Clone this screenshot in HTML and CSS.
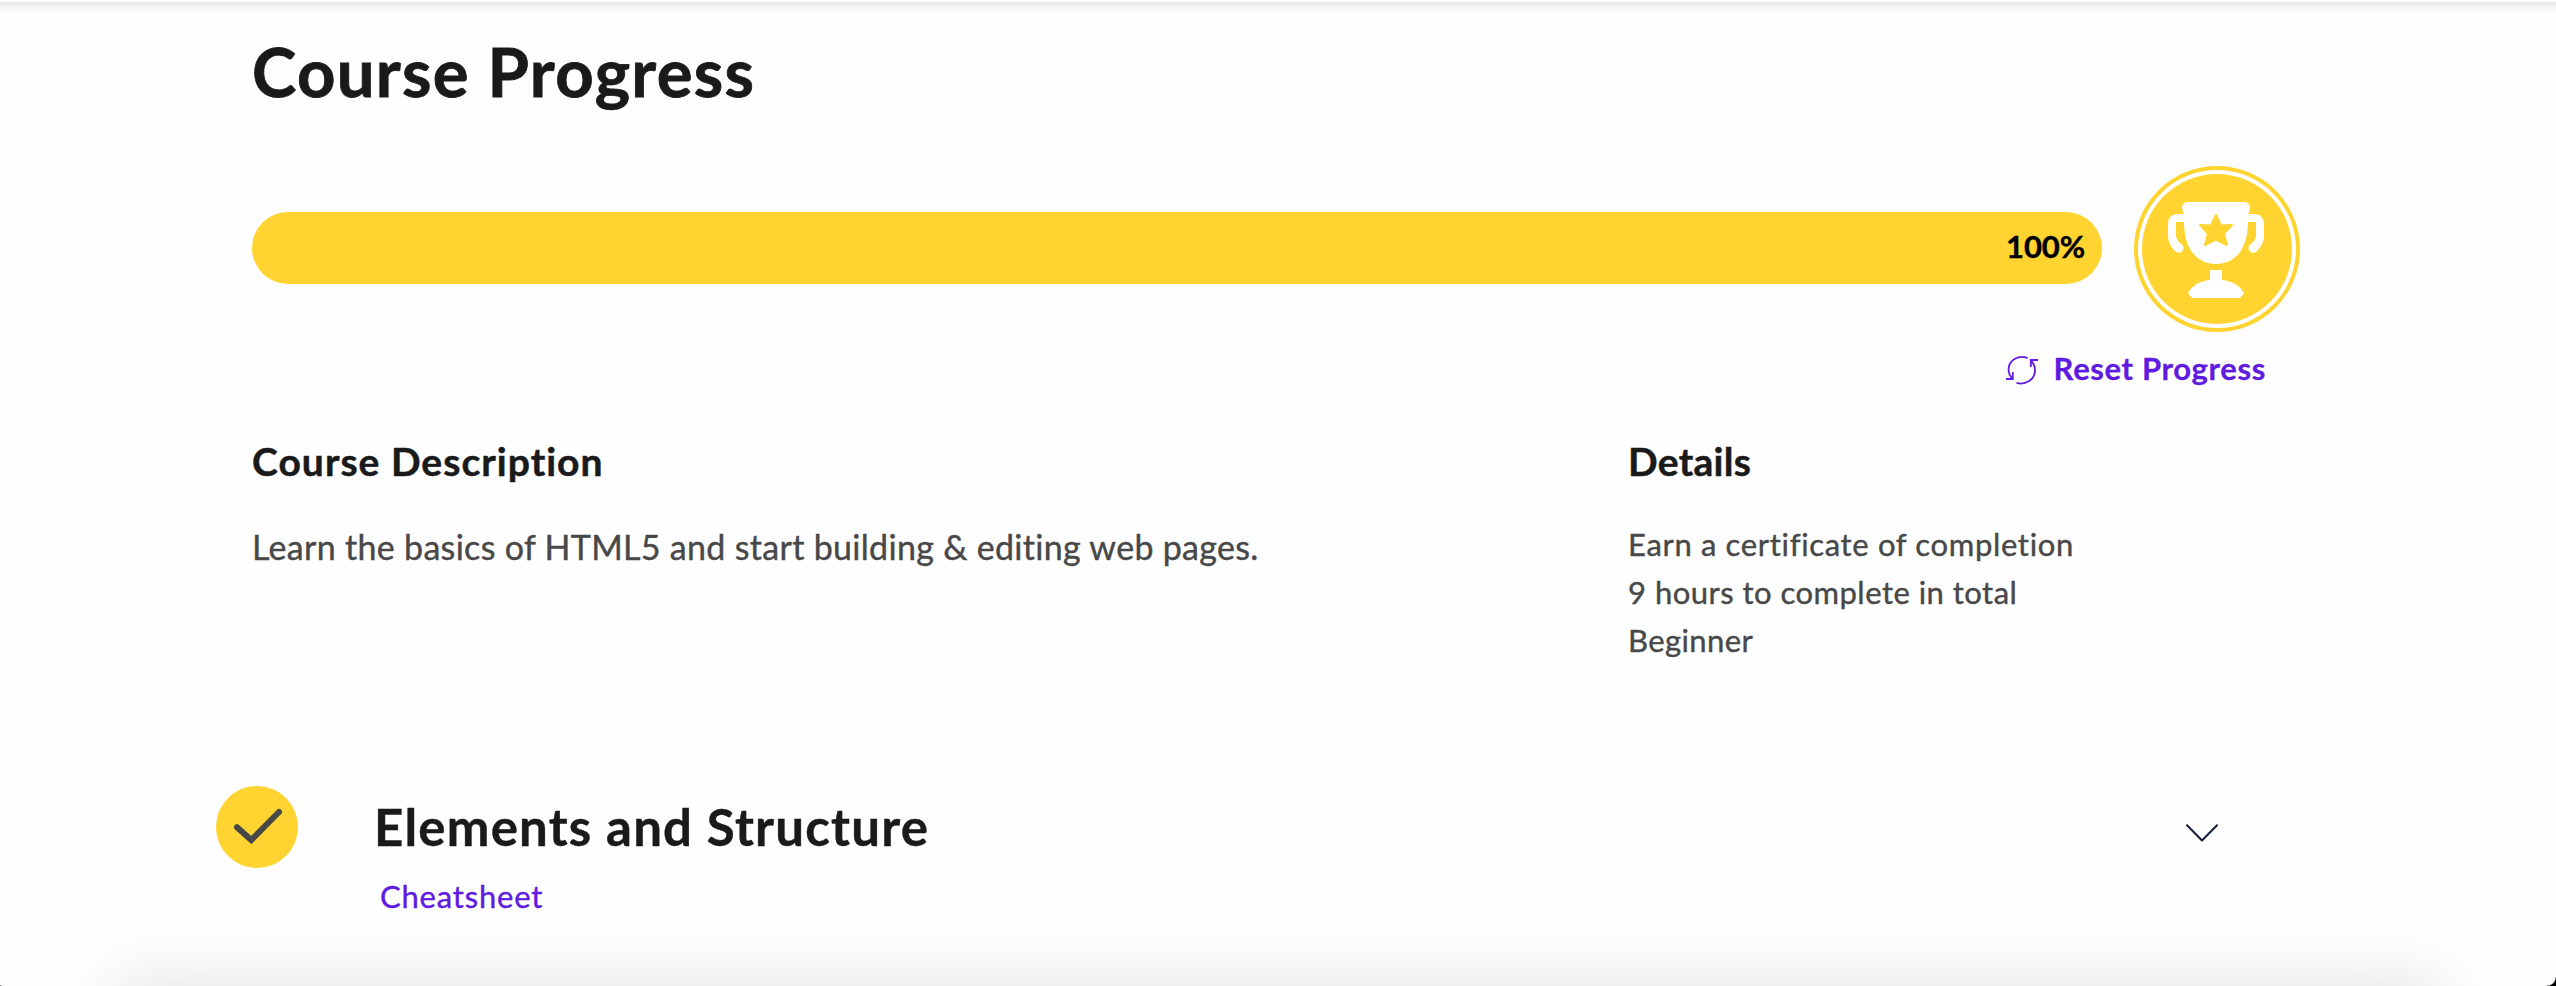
FILE: index.html
```html
<!DOCTYPE html>
<html lang="en">
<head>
<meta charset="utf-8">
<title>Course Progress</title>
<link rel="stylesheet" href="styles.css">
</head>
<body>
<div class="top-shadow"></div>
<main class="page">
  <h1 class="title">Course Progress</h1>
  <div class="progress-row">
    <div class="bar"><span class="percent">100%</span></div>
    <svg class="trophy" viewBox="0 0 166 166">
      <circle cx="83" cy="83" r="81" fill="#fff" stroke="#ffd431" stroke-width="4"/>
      <circle cx="83" cy="83" r="75" fill="#ffd431"/>
      <path fill="#fff" d="M53 36H111Q116 37 116 42L114.500 48H121Q130 49 130 58V69C130 76 127 81 122.500 85.500A4.600 4.600 0 0 1 116 78.500C120 76 122 73 122 69V56H114C114 83 101 98 82 98S50 83 50 56H42V69C42 73 44 76 48 78.500A4.600 4.600 0 0 1 41.500 85.500C37 81 34 76 34 69V58Q34 49 43 48H49.500L48 42Q48 37 53 36Z"/>
      <path fill="#ffd431" stroke="#ffd431" stroke-width="2" stroke-linejoin="round" d="M82 49L87 59.500L98 59L90 67.500L93 79L82 73.500L71 79L74 67.500L66 59L77 59.500Z"/>
      <path fill="#fff" d="M76 104H88V114C98 115 107 120 110 127.500L106 132H58L54 127.500C57 120 66 115 76 114Z"/>
    </svg>
  </div>
  <a class="reset">
    <svg class="reset-icon" viewBox="0 0 34 30" fill="none" stroke="#5f1be0" stroke-width="1.800">
      <path d="M22.500 3.200C14 -.5 4 5 3.600 14C3.400 17.500 4.500 20.500 7.500 23.800M1 24H7.800V17M11.500 27.800C20 30.500 29.500 25 30 16C30.200 12 28.500 8 25.800 5.400M33 5H25.800V12"/>
    </svg>
    <span class="reset-label">Reset Progress</span>
  </a>
  <div class="info">
    <section class="description">
      <h2 class="subtitle">Course Description</h2>
      <p class="lead">Learn the basics of HTML5 and start building &amp; editing web pages.</p>
    </section>
    <section class="details">
      <h2 class="subtitle subtitle-details">Details</h2>
      <ul class="list">
        <li class="cert">Earn a certificate of completion</li>
        <li class="hours">9 hours to complete in total</li>
        <li class="level">Beginner</li>
      </ul>
    </section>
  </div>
  <section class="module">
    <svg class="check" viewBox="0 0 82 82">
      <circle cx="41" cy="41" r="41" fill="#ffd431"/>
      <path d="M21 41.300L35.300 54L63 26" fill="none" stroke="#484848" stroke-width="6" stroke-linecap="round"/>
    </svg>
    <div class="module-text">
      <h2 class="module-title">Elements and Structure</h2>
      <a class="cheatsheet">Cheatsheet</a>
    </div>
    <svg class="chevron" viewBox="0 0 34 18" fill="none" stroke="#141c3a" stroke-width="2" stroke-linecap="round" stroke-linejoin="round">
      <path d="M2 1.300L17 16.500L32 1.300"/>
    </svg>
  </section>
</main>
<div class="bottom-fade"><div class="bottom-shadow"></div></div>
<i class="corner corner-left"></i>
<i class="corner corner-right"></i>
</body>
</html>
```
FILE: styles.css
```css
* { box-sizing: border-box; }
body {
  margin: 0;
  height: 986px;
  overflow: hidden;
  position: relative;
  background: #fefefe;
  color: #484848;
  font-family: Lato, "Liberation Sans", sans-serif;
}
h1, h2, p, ul { margin: 0; padding: 0; font-weight: 700; }
.top-shadow {
  position: absolute;
  inset: 2px 0 auto;
  height: 12px;
  background: linear-gradient(#e6e6e6, #f3f3f3 40%, #fefefe);
}
.page {
  position: relative;
  display: flex;
  flex-direction: column;
  padding: 31px 256px 0 252px;
}
.title {
  color: #1a1a1a;
  font-size: 67px;
  line-height: 80px;
  letter-spacing: 1.32px;
  -webkit-text-stroke: .8px;
}
.progress-row {
  display: flex;
  align-items: flex-start;
  gap: 32px;
  margin-top: 55px;
}
.bar {
  width: 1850px;
  height: 72px;
  margin-top: 46px;
  padding: 0 17px 4px;
  border-radius: 36px;
  background: #ffd431;
  display: flex;
  align-items: center;
  justify-content: flex-end;
}
.percent {
  color: #000;
  font-size: 31px;
  font-weight: 700;
  letter-spacing: -.1px;
  -webkit-text-stroke: .4px;
}
.trophy { width: 166px; height: 166px; flex: none; }
.reset {
  align-self: flex-end;
  display: flex;
  align-items: center;
  gap: 15px;
  margin: 12px 34px 0 0;
  color: #5f1be0;
  font-size: 31px;
  font-weight: 700;
  line-height: 48px;
  letter-spacing: .63px;
  -webkit-text-stroke: .3px;
}
.reset-icon { width: 34px; height: 30px; margin-top: 4px; }
.info {
  display: grid;
  grid-template-columns: 1376px 1fr;
  margin-top: 45px;
}
.subtitle {
  color: #1a1a1a;
  font-size: 39px;
  line-height: 48px;
  letter-spacing: 1.03px;
  -webkit-text-stroke: .5px;
}
.subtitle-details { letter-spacing: .3px; }
.lead {
  margin-top: 35px;
  font-size: 34px;
  font-weight: 400;
  line-height: 54px;
  letter-spacing: .31px;
  -webkit-text-stroke: .4px;
}
.list {
  margin-top: 35px;
  list-style: none;
  font-size: 31px;
  font-weight: 400;
  line-height: 48px;
  -webkit-text-stroke: .4px;
}
.cert { letter-spacing: .66px; }
.hours { letter-spacing: .48px; }
.level { letter-spacing: .4px; }
.module {
  display: flex;
  align-items: flex-start;
  margin: 122px 0 0 -36px;
}
.check { width: 82px; height: 82px; flex: none; }
.module-text {
  flex: 1;
  padding: 11px 0 0 76px;
}
.module-title {
  color: #1a1a1a;
  font-size: 51px;
  line-height: 60px;
  letter-spacing: 1.2px;
  -webkit-text-stroke: .4px;
}
.cheatsheet {
  display: block;
  margin: 15px 0 0 6px;
  color: #5f1be0;
  font-size: 31px;
  line-height: 48px;
  letter-spacing: .8px;
  -webkit-text-stroke: .4px;
}
.chevron { width: 34px; height: 18px; margin: 38px 81px 0 0; }
.bottom-fade {
  position: absolute;
  left: 0;
  right: 0;
  bottom: 0;
  height: 110px;
  overflow: hidden;
  pointer-events: none;
}
.bottom-shadow {
  margin: 110px 166px 0;
  box-shadow: 0 52px 76px 50px rgba(0, 0, 0, .13);
}
.corner {
  position: absolute;
  bottom: 0;
}
.corner-left {
  left: 0;
  width: 6px;
  height: 2px;
  background: radial-gradient(ellipse at 100% 0, transparent 68%, #000 100%);
}
.corner-right {
  right: 0;
  width: 9px;
  height: 9px;
  background: radial-gradient(circle at 0 0, transparent 8px, #000 9.500px);
}
```
